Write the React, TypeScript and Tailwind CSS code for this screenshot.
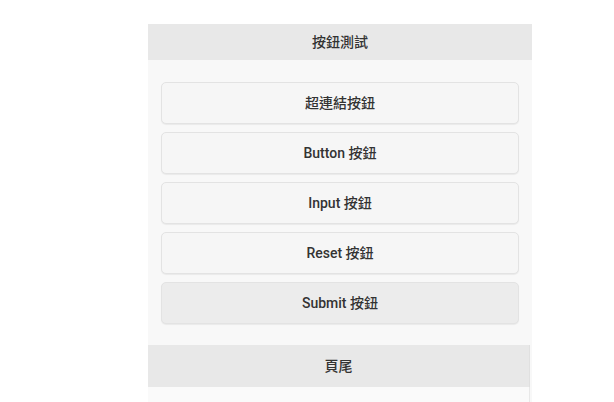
import React from 'react';

const buttons = ['超連結按鈕', 'Button 按鈕', 'Input 按鈕', 'Reset 按鈕', 'Submit 按鈕'];

export default function App() {
  return (
    <div className="min-h-screen bg-white pt-6 font-['Roboto','Noto_Sans_CJK_TC',sans-serif] text-sm text-[#333]">
      <div className="ml-[148px] w-[384px] bg-[#f8f8f8]">
        <div className="flex h-9 items-center justify-center bg-[#e8e8e8] font-medium">按鈕測試</div>
        <div className="flex flex-col gap-2 px-[13px] pt-[22px] pb-[21px]">
          {buttons.map((b, i) => (
            <button
              key={b}
              className={`h-[42px] rounded-[5px] border border-[#e3e3e3] font-medium text-[#333] shadow-[0_1px_1px_rgba(0,0,0,0.06)] ${
                i === 4 ? 'bg-[#ececec]' : 'bg-[#f6f6f6]'
              }`}
            >
              {b}
            </button>
          ))}
        </div>
        <div className="flex h-[42px] w-[382px] items-center justify-center border-r border-[#e0e0e0] bg-[#e8e8e8] font-medium">頁尾</div>
        <div className="h-4 w-[382px] border-r border-[#e8e8e8] bg-[#fafafa]" />
      </div>
    </div>
  );
}
